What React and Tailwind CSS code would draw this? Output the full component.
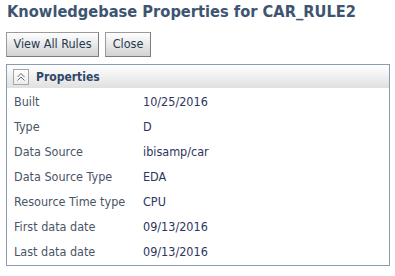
import React from "react";

const rows = [
  ["Built", "10/25/2016"],
  ["Type", "D"],
  ["Data Source", "ibisamp/car"],
  ["Data Source Type", "EDA"],
  ["Resource Time type", "CPU"],
  ["First data date", "09/13/2016"],
  ["Last data date", "09/13/2016"],
];

function Btn({ children, w }) {
  return (
    <button
      className={`h-[25px] ${w} flex items-center justify-center border border-[#9a9a9a] border-b-[#7c7c7c] border-r-[#7c7c7c] bg-gradient-to-b from-[#ffffff] to-[#d2d2d2] text-[12.5px] text-[#273850]`}
    >
      {children}
    </button>
  );
}

export default function App() {
  return (
    <div
      className="w-[395px] h-[276px] bg-white overflow-hidden"
      style={{ fontFamily: '"DejaVu Sans Condensed", "DejaVu Sans", sans-serif' }}
    >
      <div className="pl-[7px] pt-[2px] h-[32px] text-[16.3px] font-bold text-[#3d5570] leading-[20px]">
        Knowledgebase Properties for CAR_RULE2
      </div>
      <div className="flex gap-[6px] pl-[6px] h-[32px]">
        <Btn w="w-[93px]">View All Rules</Btn>
        <Btn w="w-[46px]">Close</Btn>
      </div>
      <div className="ml-[6px] w-[384px] h-[202px] border border-[#8b9bb3] flex flex-col">
        <div className="h-[23px] flex items-center bg-gradient-to-b from-[#ffffff] to-[#e0e0e0] pl-[6px] gap-[7px]">
          <div className="w-[16px] h-[16px] border border-[#a6a6a6] bg-gradient-to-b from-white to-[#ececec] flex items-center justify-center">
            <svg width="10" height="10" viewBox="0 0 10 10" fill="none" stroke="#6b6b6b" strokeWidth="1">
              <path d="M1.5 5 L5 1.5 L8.5 5" />
              <path d="M1.5 8.5 L5 5 L8.5 8.5" />
            </svg>
          </div>
          <span className="text-[12px] font-bold text-[#2e4668]">Properties</span>
        </div>
        <div className="pt-[2px] flex flex-col">
          {rows.map(([k, v]) => (
            <div key={k} className="h-[25px] flex items-center pl-[7px] text-[12.5px]">
              <span className="w-[129px] text-[#4a5566]">{k}</span>
              <span className="text-[#2d3560]">{v}</span>
            </div>
          ))}
        </div>
      </div>
    </div>
  );
}
